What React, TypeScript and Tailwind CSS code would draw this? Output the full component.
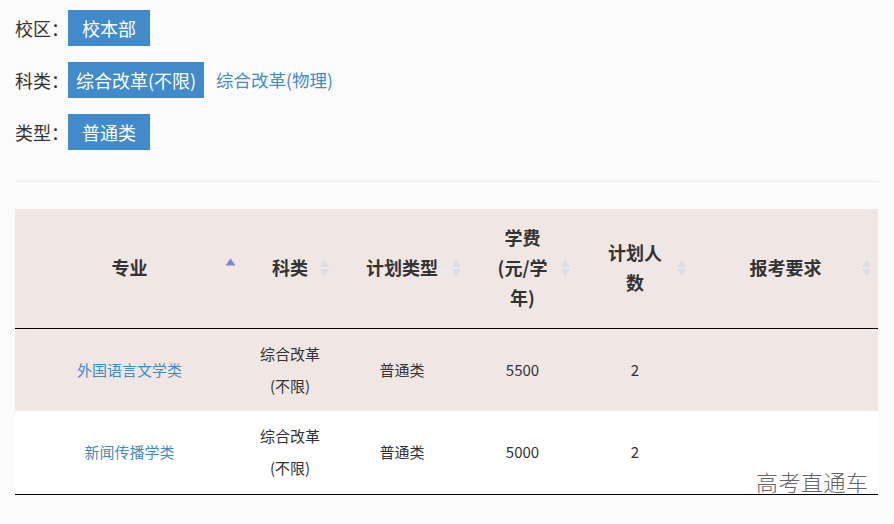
import type { ReactNode } from "react";

const FILTERS = [
  { label: "校区", active: "校本部", w: "w-[82px]", others: [] as string[] },
  { label: "科类", active: "综合改革(不限)", w: "w-[136px]", others: ["综合改革(物理)"] },
  { label: "类型", active: "普通类", w: "w-[82px]", others: [] as string[] },
];

const COLS: { title: ReactNode; width: string; sort: "asc" | "none" }[] = [
  { title: "专业", width: "w-[229px]", sort: "asc" },
  { title: "科类", width: "w-[92px]", sort: "none" },
  { title: "计划类型", width: "w-[132px]", sort: "none" },
  { title: <>学费<br />(元/学<br />年)</>, width: "w-[109px]", sort: "none" },
  { title: <>计划人<br />数</>, width: "w-[116px]", sort: "none" },
  { title: "报考要求", width: "w-[185px]", sort: "none" },
];

const ROWS = [
  { major: "外国语言文学类", fee: "5500", count: "2" },
  { major: "新闻传播学类", fee: "5000", count: "2" },
];

function SortIcon({ dir }: { dir: "asc" | "none" }) {
  if (dir === "asc") {
    return (
      <svg width="11" height="8" viewBox="0 0 11 8" className="absolute right-[8px] top-[49px]">
        <path d="M5.5 0.5 L10.5 7.5 L0.5 7.5 Z" fill="#7f82dc" />
      </svg>
    );
  }
  return (
    <svg width="11" height="18" viewBox="0 0 11 18" className="absolute right-[6px] top-1/2 -translate-y-1/2">
      <path d="M5.5 1 L10 8 L1 8 Z" fill="#d9dfe4" />
      <path d="M5.5 17 L10 10 L1 10 Z" fill="#d9dfe4" />
    </svg>
  );
}

export default function App() {
  return (
    <div className="relative w-[894px] h-[524px] overflow-hidden bg-[#fbfbfb] text-[#333] font-['Noto_Sans_CJK_SC','Noto_Sans',sans-serif]">
      {/* FILTERS */}
      <div className="pl-[15px] pt-[10px] flex flex-col gap-[16px]">
        {FILTERS.map((f) => (
          <div key={f.label} className="flex items-center h-[36px]">
            <span className="w-[53px] shrink-0 whitespace-nowrap text-[18px]">{f.label}：</span>
            <span className={`${f.w} h-[36px] shrink-0 whitespace-nowrap flex items-center justify-center bg-[#428bca] text-white text-[18px]`}>{f.active}</span>
            {f.others.map((o) => (
              <span key={o} className="ml-[12px] whitespace-nowrap text-[#428bca] text-[17.5px]">{o}</span>
            ))}
          </div>
        ))}
      </div>

      <div className="mx-[15px] mt-[31px] border-t border-[#eeeeee]" />

      {/* TABLE */}
      <table className="mt-[27px] ml-[15px] w-[863px] table-fixed border-collapse">
        <colgroup>
          {COLS.map((c, i) => (
            <col key={i} className={c.width} />
          ))}
        </colgroup>
        <thead>
          <tr className="bg-[#f0e6e4] border-b border-black">
            {COLS.map((c, i) => (
              <th key={i} className="relative h-[119px] pb-[2px] text-center text-[18px] font-bold leading-[30px] text-[#333]">
                {c.title}
                <SortIcon dir={c.sort} />
              </th>
            ))}
          </tr>
        </thead>
        <tbody>
          {ROWS.map((r, i) => (
            <tr key={r.major} className={`${i % 2 === 0 ? "bg-[#f0e6e4]" : "bg-white"} ${i === ROWS.length - 1 ? "border-b border-black" : ""}`}>
              <td className="h-[83px] text-center text-[15px] text-[#428bca]">{r.major}</td>
              <td className="text-center text-[15px] leading-[32px] text-[#333]">综合改革<br />(不限)</td>
              <td className="text-center text-[15px] text-[#333]">普通类</td>
              <td className="text-center text-[15px] text-[#333]">{r.fee}</td>
              <td className="text-center text-[15px] text-[#333]">{r.count}</td>
              <td />
            </tr>
          ))}
        </tbody>
      </table>

      {/* watermark */}
      <div className="absolute left-[756px] top-[465px] text-[22px] text-[#666] font-light tracking-[0.5px]">高考直通车</div>
    </div>
  );
}
